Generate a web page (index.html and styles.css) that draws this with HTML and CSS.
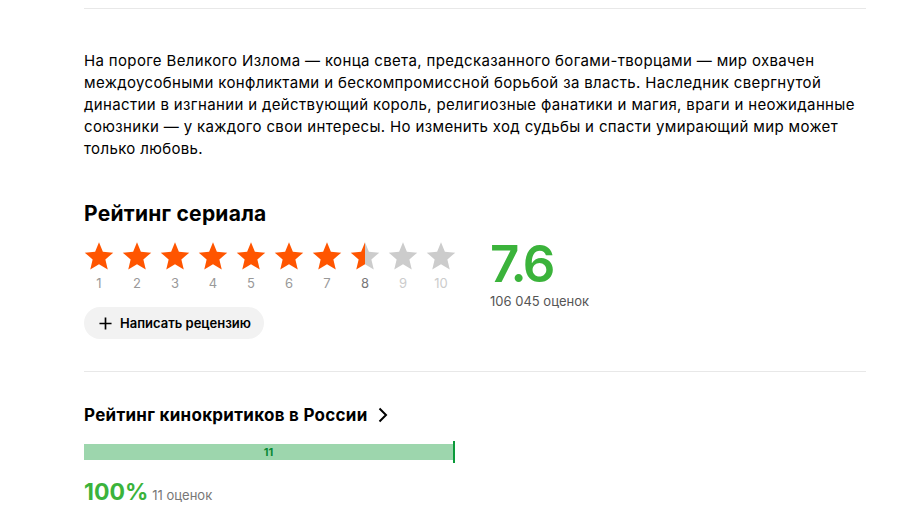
FILE: index.html
```html
<!DOCTYPE html>
<html lang="ru">
<head>
<meta charset="utf-8">
<link rel="stylesheet" href="styles.css">
</head>
<body>
<div class="page">
  <hr class="rule top-rule">
  <p class="synopsis">На пороге Великого Излома — конца света, предсказанного богами-творцами — мир охвачен междоусобными конфликтами и бескомпромиссной борьбой за власть. Наследник свергнутой династии в изгнании и действующий король, религиозные фанатики и магия, враги и неожиданные союзники — у каждого свои интересы. Но изменить ход судьбы и спасти умирающий мир может только любовь.</p>

  <h2 class="section-title">Рейтинг сериала</h2>
  <div class="rating">
    <div class="rating-left">
      <svg width="0" height="0" class="defs">
        <defs>
          <linearGradient id="half" x1="0" x2="1" y1="0" y2="0">
            <stop offset="50%" stop-color="#ff5500"/>
            <stop offset="50%" stop-color="#cccccc"/>
          </linearGradient>
          <polygon id="star" points="12,1 15.1,8.6 23.4,9.3 17.1,14.7 19,22.8 12,18.5 5,22.8 6.9,14.7 0.6,9.3 8.9,8.6"/>
        </defs>
      </svg>
      <div class="stars">
        <div class="star-item"><svg class="star on" viewBox="0 0 24 24"><use href="#star"/></svg><span class="num">1</span></div>
        <div class="star-item"><svg class="star on" viewBox="0 0 24 24"><use href="#star"/></svg><span class="num">2</span></div>
        <div class="star-item"><svg class="star on" viewBox="0 0 24 24"><use href="#star"/></svg><span class="num">3</span></div>
        <div class="star-item"><svg class="star on" viewBox="0 0 24 24"><use href="#star"/></svg><span class="num">4</span></div>
        <div class="star-item"><svg class="star on" viewBox="0 0 24 24"><use href="#star"/></svg><span class="num">5</span></div>
        <div class="star-item"><svg class="star on" viewBox="0 0 24 24"><use href="#star"/></svg><span class="num">6</span></div>
        <div class="star-item"><svg class="star on" viewBox="0 0 24 24"><use href="#star"/></svg><span class="num">7</span></div>
        <div class="star-item"><svg class="star half" viewBox="0 0 24 24"><use href="#star"/></svg><span class="num num-current">8</span></div>
        <div class="star-item"><svg class="star off" viewBox="0 0 24 24"><use href="#star"/></svg><span class="num num-off">9</span></div>
        <div class="star-item"><svg class="star off" viewBox="0 0 24 24"><use href="#star"/></svg><span class="num num-off">10</span></div>
      </div>
      <button class="review-btn">
        <svg class="plus" viewBox="0 0 14 14"><path d="M7 0.5V13.5M0.5 7H13.5" stroke="#000" stroke-width="1.8" fill="none"/></svg>
        <span>Написать рецензию</span>
      </button>
    </div>
    <div class="rating-right">
      <div class="score">7.6</div>
      <div class="votes">106 045 оценок</div>
    </div>
  </div>

  <hr class="rule mid-rule">

  <h3 class="critics-title">Рейтинг кинокритиков в России
    <svg class="chevron" viewBox="0 0 10 16"><path d="M1.5 1.5L8 8L1.5 14.5" stroke="#000" stroke-width="2" fill="none"/></svg>
  </h3>
  <div class="bar-wrap">
    <div class="bar"><span>11</span></div>
    <div class="bar-tick"></div>
  </div>
  <div class="critics-score">
    <span class="percent">100%</span>
    <span class="critics-votes">11 оценок</span>
  </div>
</div>
</body>
</html>
```

FILE: styles.css
```css
html, body {
  margin: 0;
  padding: 0;
  background: #fff;
}
body {
  font-family: "Inter", "Noto Sans", sans-serif;
  color: #000;
}
.page {
  margin-left: 84px;
  width: 782px;
  padding-top: 8px;
}
.rule {
  border: 0;
  height: 1px;
  background: #e8e8e8;
  margin: 0;
}
.synopsis {
  margin: 41px 0 0;
  font-size: 15px;
  line-height: 22px;
  letter-spacing: 0.35px;
  color: #000;
}
.section-title {
  margin: 42px 0 0;
  font-size: 21px;
  line-height: 24px;
  letter-spacing: 0.25px;
  font-weight: 700;
}
.rating {
  display: flex;
  margin-top: 15px;
}
.rating-left {
  width: 406px;
}
.defs {
  position: absolute;
}
.stars {
  display: flex;
}
.star-item {
  width: 38px;
  display: flex;
  flex-direction: column;
  align-items: flex-start;
}
.star {
  width: 30px;
  height: 30px;
  display: block;
}
.star.on { fill: #ff5500; }
.star.off { fill: #cccccc; }
.star.half { fill: url(#half); }
.num {
  width: 30px;
  text-align: center;
  font-size: 13px;
  line-height: 16px;
  margin-top: 4px;
  color: #999;
}
.num-current { color: #777; }
.num-off { color: #ccc; }
.review-btn {
  margin-top: 16px;
  display: flex;
  align-items: center;
  gap: 8px;
  height: 32px;
  width: 180px;
  padding: 0 0 0 15px;
  border: 0;
  border-radius: 16px;
  background: #f2f2f2;
  font-family: inherit;
  font-size: 13px;
  font-weight: 600;
  color: #000;
}
.plus {
  width: 13px;
  height: 13px;
}
.rating-right {
  display: flex;
  flex-direction: column;
}
.score {
  font-size: 51px;
  line-height: 46px;
  font-weight: 600;
  color: #3bb33b;
  letter-spacing: -2.5px;
}
.votes {
  margin-top: 6px;
  font-size: 13px;
  line-height: 16px;
  color: #555;
}
.mid-rule {
  margin-top: 32px;
}
.critics-title {
  margin: 32px 0 0;
  font-size: 17px;
  line-height: 22px;
  letter-spacing: 0.28px;
  font-weight: 700;
  display: flex;
  align-items: center;
  gap: 10px;
}
.chevron {
  width: 10px;
  height: 16px;
}
.bar-wrap {
  display: flex;
  align-items: center;
  margin-top: 15px;
  width: 371px;
}
.bar {
  flex: 1;
  height: 16px;
  background: #9dd6ad;
  display: flex;
  align-items: center;
  justify-content: center;
  font-size: 11px;
  font-weight: 700;
  color: #0a8a35;
}
.bar-tick {
  width: 2px;
  height: 22px;
  background: #0a9a3a;
}
.critics-score {
  display: flex;
  align-items: baseline;
  gap: 4px;
  margin-top: 15px;
}
.percent {
  font-size: 23px;
  line-height: 28px;
  font-weight: 700;
  color: #3bb33b;
}
.critics-votes {
  font-size: 13px;
  color: #777;
}
```
